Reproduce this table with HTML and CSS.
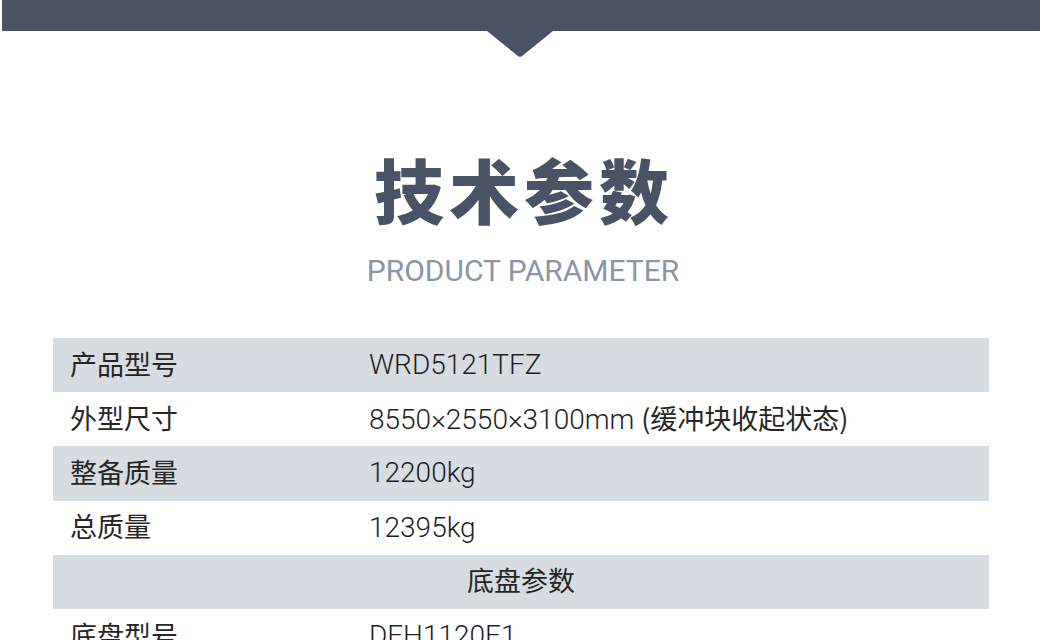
FILE: index.html
```html
<!DOCTYPE html>
<html lang="zh">
<head>
<meta charset="utf-8">
<link rel="stylesheet" href="styles.css">
</head>
<body>
<div class="page">
  <header class="topbar"></header>
  <svg class="notch" width="66" height="27" viewBox="0 0 66 27"><path d="M0 0 H66 L36 24.2 Q33 27.4 30 24.2 Z" fill="#4a5265"/></svg>
  <h1 class="title">技术参数</h1>
  <p class="subtitle">PRODUCT PARAMETER</p>
  <div class="spec">
    <div class="row alt"><span class="label">产品型号</span><span class="value">WRD5121TFZ</span></div>
    <div class="row"><span class="label">外型尺寸</span><span class="value">8550×2550×3100mm <span class="cjk">(缓冲块收起状态)</span></span></div>
    <div class="row alt"><span class="label">整备质量</span><span class="value">12200kg</span></div>
    <div class="row"><span class="label">总质量</span><span class="value">12395kg</span></div>
    <div class="row alt section"><span class="section-title">底盘参数</span></div>
    <div class="row"><span class="label">底盘型号</span><span class="value">DFH1120E1</span></div>
    <div class="row alt"><span class="label">发动机型号</span><span class="value">&nbsp;</span></div>
  </div>
</div>
</body>
</html>
```
FILE: styles.css
```css
html, body {
  margin: 0;
  padding: 0;
  background: #ffffff;
}
body {
  font-family: Roboto, "Noto Sans CJK SC", sans-serif;
  color: #262626;
}
.page {
  display: flex;
  flex-direction: column;
  align-items: stretch;
  overflow: hidden;
  height: 640px;
}
.topbar {
  height: 31px;
  margin: 0 2px;
  background: #4a5265;
  flex: none;
}
.notch {
  display: block;
  align-self: center;
  margin-left: -2px;
  flex: none;
}
.title {
  margin: 96px 0 0;
  padding-left: 6px;
  text-align: center;
  font-family: "Noto Sans CJK SC", sans-serif;
  font-weight: 900;
  font-size: 70px;
  line-height: 1;
  color: #4a5265;
  letter-spacing: 5px;
}
.subtitle {
  margin: 32px 0 0;
  padding-left: 4px;
  text-align: center;
  font-family: Roboto, "Noto Sans", sans-serif;
  font-size: 30px;
  line-height: 1;
  color: #8a95a8;
  letter-spacing: 0;
}
.spec {
  margin: 52px 53px 0;
  display: flex;
  flex-direction: column;
}
.row {
  height: 54.2px;
  display: grid;
  grid-template-columns: 299px 1fr;
  align-items: center;
  padding-left: 17px;
  flex: none;
}
.row.alt {
  background: #d7dbe2;
}
.label, .section-title {
  font-family: "Noto Sans CJK SC", sans-serif;
  font-size: 27px;
  line-height: 1;
  color: #262626;
  padding-bottom: 4px;
}
.value {
  font-family: Roboto, "Noto Sans CJK SC", sans-serif;
  font-weight: 300;
  font-size: 28px;
  line-height: 1;
  color: #1f1f1f;
  letter-spacing: 0;
}
.cjk {
  font-family: "Noto Sans CJK SC", sans-serif;
  font-weight: 400;
  font-size: 27px;
  color: #262626;
}
.row.section {
  grid-template-columns: 1fr;
  padding-left: 0;
  justify-items: center;
}
```
